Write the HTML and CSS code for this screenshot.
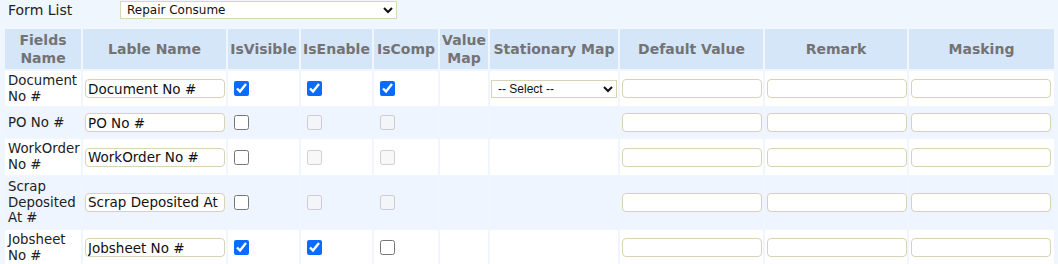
FILE: index.html
```html
<!DOCTYPE html>
<html>
<head>
<meta charset="utf-8">
<link rel="stylesheet" href="styles.css">
</head>
<body>
<div class="topbar">
  <label class="toplabel">Form List</label>
  <select class="formsel"><option>Repair Consume</option></select>
</div>
<table class="grid">
  <colgroup>
    <col style="width:76px"><col style="width:143px"><col style="width:71px"><col style="width:71px"><col style="width:64px"><col style="width:48px"><col style="width:128px"><col style="width:143px"><col style="width:142px"><col style="width:145px">
  </colgroup>
  <thead>
    <tr>
      <th>Fields<br>Name</th>
      <th>Lable Name</th>
      <th>IsVisible</th>
      <th>IsEnable</th>
      <th>IsComp</th>
      <th>Value<br>Map</th>
      <th>Stationary Map</th>
      <th>Default Value</th>
      <th>Remark</th>
      <th>Masking</th>
    </tr>
  </thead>
  <tbody>
    <tr class="odd">
      <td class="fname">Document<br>No #</td>
      <td><input class="txt" type="text" value="Document No #"></td>
      <td><input class="chk" type="checkbox" checked></td>
      <td><input class="chk" type="checkbox" checked></td>
      <td><input class="chk" type="checkbox" checked></td>
      <td></td>
      <td><select class="mapsel"><option>-- Select --</option></select></td>
      <td><input class="txt" type="text"></td>
      <td><input class="txt" type="text"></td>
      <td><input class="txt" type="text"></td>
    </tr>
    <tr class="even">
      <td class="fname">PO No #</td>
      <td><input class="txt" type="text" value="PO No #"></td>
      <td><input class="chk" type="checkbox"></td>
      <td><input class="chk" type="checkbox" disabled></td>
      <td><input class="chk" type="checkbox" disabled></td>
      <td></td>
      <td></td>
      <td><input class="txt" type="text"></td>
      <td><input class="txt" type="text"></td>
      <td><input class="txt" type="text"></td>
    </tr>
    <tr class="odd">
      <td class="fname">WorkOrder<br>No #</td>
      <td><input class="txt" type="text" value="WorkOrder No #"></td>
      <td><input class="chk" type="checkbox"></td>
      <td><input class="chk" type="checkbox" disabled></td>
      <td><input class="chk" type="checkbox" disabled></td>
      <td></td>
      <td></td>
      <td><input class="txt" type="text"></td>
      <td><input class="txt" type="text"></td>
      <td><input class="txt" type="text"></td>
    </tr>
    <tr class="even">
      <td class="fname">Scrap<br>Deposited<br>At #</td>
      <td><input class="txt" type="text" value="Scrap Deposited At #"></td>
      <td><input class="chk" type="checkbox"></td>
      <td><input class="chk" type="checkbox" disabled></td>
      <td><input class="chk" type="checkbox" disabled></td>
      <td></td>
      <td></td>
      <td><input class="txt" type="text"></td>
      <td><input class="txt" type="text"></td>
      <td><input class="txt" type="text"></td>
    </tr>
    <tr class="odd">
      <td class="fname">Jobsheet<br>No #</td>
      <td><input class="txt" type="text" value="Jobsheet No #"></td>
      <td><input class="chk" type="checkbox" checked></td>
      <td><input class="chk" type="checkbox" checked></td>
      <td><input class="chk" type="checkbox"></td>
      <td></td>
      <td></td>
      <td><input class="txt" type="text"></td>
      <td><input class="txt" type="text"></td>
      <td><input class="txt" type="text"></td>
    </tr>
  </tbody>
</table>
</body>
</html>
```
FILE: styles.css
```css
html, body {
  margin: 0;
  padding: 0;
  background: #eff6fd;
  font-family: "DejaVu Sans", Verdana, sans-serif;
  color: #222;
}
.topbar {
  display: flex;
  align-items: center;
  height: 20px;
  padding: 0 0 0 8px;
  margin-top: 0;
}
.toplabel {
  font-size: 14px;
  width: 112px;
  color: #222;
}
.formsel {
  width: 277px;
  height: 18px;
  font-family: "DejaVu Sans", Verdana, sans-serif;
  font-size: 12px;
  color: #111;
  background: #fff;
  border: 1px solid #d8d8b8;
  border-radius: 0;
  padding: 0 2px;
  margin: 0;
}
.grid {
  table-layout: fixed;
  width: 1053px;
  border-collapse: separate;
  border-spacing: 2px;
  margin: 7px 0 0 3px;
}
.grid th {
  background: #d6e6f9;
  color: #737373;
  font-size: 14px;
  font-weight: bold;
  line-height: 18px;
  padding: 2px 0;
  text-align: center;
  vertical-align: middle;
  white-space: nowrap;
}
.grid td {
  font-size: 13.33px;
  line-height: 15.7px;
  padding: 2px 1px;
  height: 25px;
  vertical-align: middle;
  color: #222;
}
.grid tr.odd td { background: #ffffff; }
.grid tr.even td { background: #eef5fe; }
.grid td.fname {
  padding-left: 3px;
}
.txt {
  box-sizing: border-box;
  width: 140px;
  height: 19px;
  margin: 0 0 0 1px;
  padding: 0 2px;
  border: 1px solid #d6d4b4;
  border-radius: 4px;
  background: #fff;
  font-family: "DejaVu Sans", Verdana, sans-serif;
  font-size: 13.5px;
  color: #111;
  display: block;
}
.chk {
  width: 15px;
  height: 15px;
  margin: 3px 3px 3px 5px;
  vertical-align: middle;
  accent-color: #0a6cff;
  display: block;
}
.mapsel {
  box-sizing: border-box;
  width: 126px;
  height: 18px;
  margin: 0;
  padding: 0 2px;
  border: 1px solid #d6d4b4;
  border-radius: 0;
  background: #fff;
  font-family: "Liberation Sans", Arial, sans-serif;
  font-size: 12px;
  color: #111;
  display: block;
}
```
